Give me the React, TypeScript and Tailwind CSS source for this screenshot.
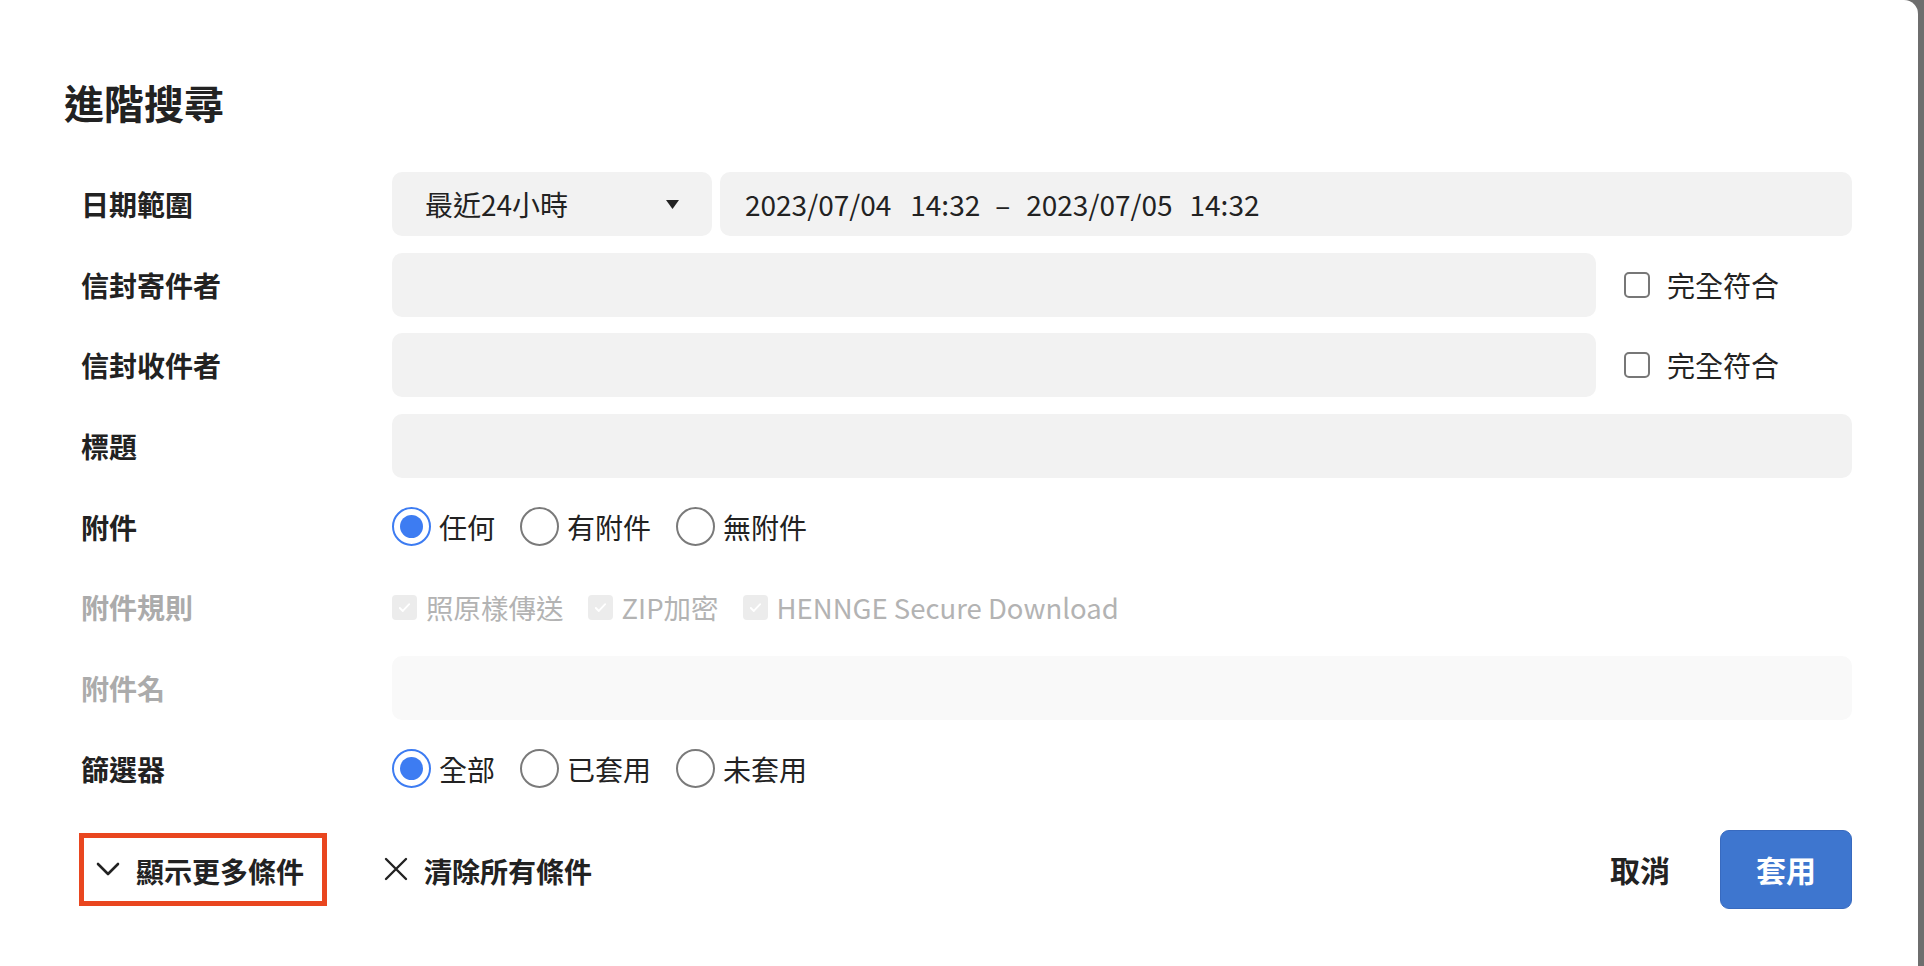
import { useState } from 'react';

const font = { fontFamily: '"Noto Sans CJK TC", "Noto Sans", sans-serif' };

function Radio({ checked, label, onClick }: { checked: boolean; label: string; onClick: () => void }) {
  return (
    <button type="button" onClick={onClick} className="flex items-center gap-[8px]">
      {checked ? (
        <span className="flex h-[39px] w-[39px] items-center justify-center rounded-full border-[2.5px] border-[#3d7cf2]">
          <span className="h-[23px] w-[23px] rounded-full bg-[#3d7cf2]" />
        </span>
      ) : (
        <span className="h-[39px] w-[39px] rounded-full border-2 border-[#7a7a7a]" />
      )}
      <span className="text-[28px] text-[#222]">{label}</span>
    </button>
  );
}

function DisabledCheck({ label }: { label: string }) {
  return (
    <div className="flex items-center gap-[9px]">
      <span className="flex h-[25px] w-[25px] items-center justify-center rounded-[4px] bg-[#ececec]">
        <svg width="15" height="15" viewBox="0 0 16 16" fill="none">
          <path d="M3 8.5l3.2 3.2L13 4.5" stroke="#fff" strokeWidth="2" strokeLinecap="round" strokeLinejoin="round" />
        </svg>
      </span>
      <span className="text-[27.5px] text-[#b3b3b3]">{label}</span>
    </div>
  );
}

function ExactMatch() {
  const [on, setOn] = useState(false);
  return (
    <div className="flex w-[256px] items-center pl-[28px]">
      <button
        type="button"
        onClick={() => setOn(!on)}
        className={`h-[26px] w-[26px] rounded-[5px] border-2 border-[#777] ${on ? 'bg-[#3d7cf2]' : 'bg-white'}`}
      />
      <span className="ml-[17px] text-[28px] text-[#222]">完全符合</span>
    </div>
  );
}

export default function App() {
  const [attachment, setAttachment] = useState('any');
  const [filter, setFilter] = useState('all');

  return (
    <div className="flex h-screen w-full bg-[#6e6e6e]" style={font}>
      <div className="flex-1 rounded-tr-[14px] bg-white pl-[64px] pr-[66px] pt-[72px]">
        <h1 className="h-[60px] text-[40px] font-bold leading-[60px] text-[#222]">進階搜尋</h1>

        <div className="mt-[40px] flex flex-col gap-[16.7px] pl-[17px]">
          {/* 日期範圍 */}
          <div className="flex h-[64px] items-center">
            <div className="w-[311px] text-[28px] font-semibold text-[#222]">日期範圍</div>
            <div className="flex h-full flex-1 gap-[8px]">
              <div className="flex w-[320px] items-center justify-between rounded-[10px] bg-[#f2f2f2] pl-[33px] pr-[33px]">
                <span className="text-[28px] text-[#222]">最近24小時</span>
                <svg width="13" height="9" viewBox="0 0 13 9">
                  <path d="M0 0h13L6.5 9z" fill="#222" />
                </svg>
              </div>
              <div className="flex flex-1 items-center rounded-[10px] bg-[#f2f2f2] pl-[25px] text-[28px] text-[#222]">
                <span>2023/07/04</span>
                <span className="ml-[19px]">14:32</span>
                <span className="ml-[15px]">–</span>
                <span className="ml-[16px]">2023/07/05</span>
                <span className="ml-[17px]">14:32</span>
              </div>
            </div>
          </div>

          {/* 信封寄件者 */}
          <div className="flex h-[64px] items-center">
            <div className="w-[311px] text-[28px] font-semibold text-[#222]">信封寄件者</div>
            <div className="h-full flex-1 rounded-[10px] bg-[#f2f2f2]" />
            <ExactMatch />
          </div>

          {/* 信封收件者 */}
          <div className="flex h-[64px] items-center">
            <div className="w-[311px] text-[28px] font-semibold text-[#222]">信封收件者</div>
            <div className="h-full flex-1 rounded-[10px] bg-[#f2f2f2]" />
            <ExactMatch />
          </div>

          {/* 標題 */}
          <div className="flex h-[64px] items-center">
            <div className="w-[311px] text-[28px] font-semibold text-[#222]">標題</div>
            <div className="h-full flex-1 rounded-[10px] bg-[#f2f2f2]" />
          </div>

          {/* 附件 */}
          <div className="flex h-[64px] items-center">
            <div className="w-[311px] text-[28px] font-semibold text-[#222]">附件</div>
            <div className="flex items-center gap-[25px]">
              <Radio checked={attachment === 'any'} label="任何" onClick={() => setAttachment('any')} />
              <Radio checked={attachment === 'with'} label="有附件" onClick={() => setAttachment('with')} />
              <Radio checked={attachment === 'without'} label="無附件" onClick={() => setAttachment('without')} />
            </div>
          </div>

          {/* 附件規則 */}
          <div className="flex h-[64px] items-center">
            <div className="w-[311px] text-[28px] font-semibold text-[#ababab]">附件規則</div>
            <div className="flex items-center gap-[24px]">
              <DisabledCheck label="照原樣傳送" />
              <DisabledCheck label="ZIP加密" />
              <DisabledCheck label="HENNGE Secure Download" />
            </div>
          </div>

          {/* 附件名 */}
          <div className="flex h-[64px] items-center">
            <div className="w-[311px] text-[28px] font-semibold text-[#ababab]">附件名</div>
            <div className="h-full flex-1 rounded-[10px] bg-[#f9f9f9]" />
          </div>

          {/* 篩選器 */}
          <div className="flex h-[64px] items-center">
            <div className="w-[311px] text-[28px] font-semibold text-[#222]">篩選器</div>
            <div className="flex items-center gap-[25px]">
              <Radio checked={filter === 'all'} label="全部" onClick={() => setFilter('all')} />
              <Radio checked={filter === 'applied'} label="已套用" onClick={() => setFilter('applied')} />
              <Radio checked={filter === 'unapplied'} label="未套用" onClick={() => setFilter('unapplied')} />
            </div>
          </div>
        </div>

        {/* Footer */}
        <div className="mt-[29px] flex h-[79px] items-center pl-[15px]">
          <button
            type="button"
            className="flex h-[73px] w-[248px] items-center border-[5px] border-[#e9461f] pl-[12px]"
          >
            <svg width="24" height="14" viewBox="0 0 24 14" fill="none">
              <path d="M2 2l10 10L22 2" stroke="#222" strokeWidth="2.6" strokeLinecap="round" strokeLinejoin="round" />
            </svg>
            <span className="ml-[16px] pt-[3px] text-[28px] font-semibold text-[#222]">顯示更多條件</span>
          </button>
          <button type="button" className="ml-[57px] flex items-center">
            <svg width="24" height="24" viewBox="0 0 24 24" fill="none">
              <path d="M2 2l20 20M22 2L2 22" stroke="#222" strokeWidth="2.4" strokeLinecap="round" />
            </svg>
            <span className="ml-[16px] pt-[3px] text-[28px] font-semibold text-[#222]">清除所有條件</span>
          </button>
          <div className="flex-1" />
          <button type="button" className="mr-[50px] text-[30px] font-bold text-[#222]">
            取消
          </button>
          <button
            type="button"
            className="h-[79px] w-[132px] rounded-[9px] border border-[#386abf] bg-[#3e76cf] text-[30px] font-bold text-white"
          >
            套用
          </button>
        </div>
      </div>
      <div className="w-[6px]" />
    </div>
  );
}
